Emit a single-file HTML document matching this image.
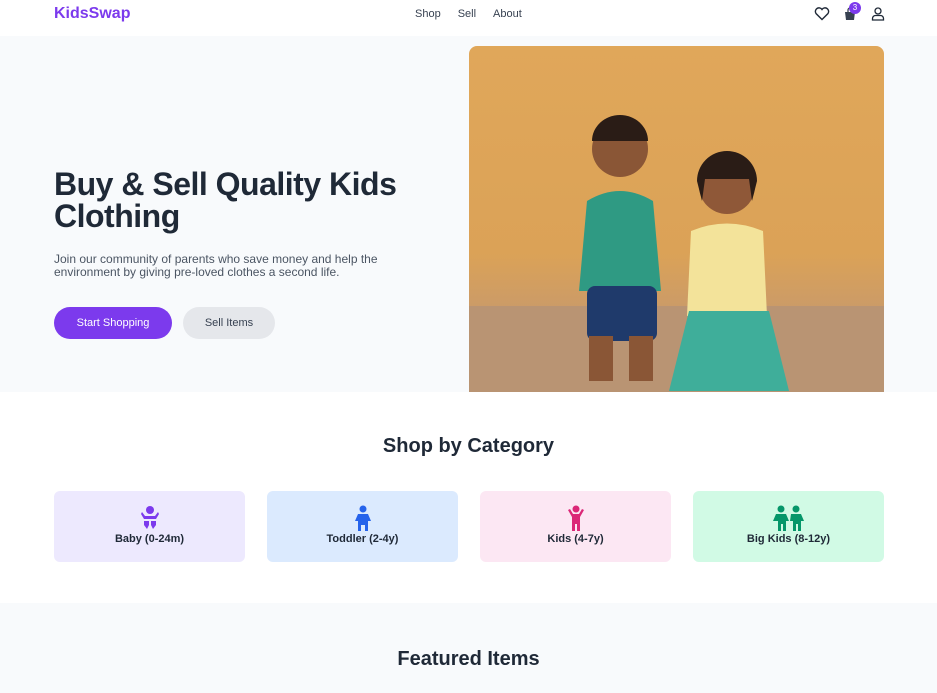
<!DOCTYPE html>
<html><head><meta charset="utf-8"><style>
*{margin:0;padding:0;box-sizing:border-box}
body{width:937px;height:693px;overflow:hidden;font-family:"Liberation Sans",sans-serif;background:#fff;color:#1f2937}
.nav{height:36px;background:#fff;position:relative}
.logo{position:absolute;left:54px;top:5px;font-size:16px;font-weight:bold;color:#7c3aed}
.links{position:absolute;left:415px;top:8px;font-size:11px;color:#374151}
.links span{margin-right:17px}
.hero{position:absolute;top:36px;left:0;width:937px;height:356px;background:#f8fafc}
h1{position:absolute;left:54px;top:168px;font-size:32px;line-height:32px;color:#1f2937;font-weight:bold;letter-spacing:-0.5px}
.p{position:absolute;left:54px;top:253px;width:370px;font-size:12px;line-height:12.5px;color:#4b5563}
.b1{position:absolute;left:54px;top:307px;width:118px;height:32px;border-radius:16px;background:#7c3aed;color:#fff;font-size:11px;text-align:center;line-height:32px}
.b2{position:absolute;left:183px;top:307px;width:92px;height:32px;border-radius:16px;background:#e5e7eb;color:#374151;font-size:11px;text-align:center;line-height:32px}
.img{position:absolute;left:469px;top:46px;width:415px;height:346px;border-radius:8px 8px 0 0;overflow:hidden;background:linear-gradient(180deg,#e0a75a 0%,#dba257 60%,#c99a6a 78%,#b89070 100%)}
h2{position:absolute;width:937px;text-align:center;font-size:20px;font-weight:bold;color:#1f2937}
.card{position:absolute;top:491px;width:191px;height:71px;border-radius:6px;text-align:center;font-size:11px;font-weight:bold;color:#1f2937}
.card svg{display:block;margin:14px auto 2px}
.feat{position:absolute;top:603px;left:0;width:937px;height:90px;background:#f8fafc}
</style></head><body>
<div class="nav"><div class="logo">KidsSwap</div>
<div class="links"><span>Shop</span><span>Sell</span><span>About</span></div>
<svg style="position:absolute;left:814px;top:7px" width="16" height="14" viewBox="0 0 16 14"><path d="M8 12.5 L2 6.5 A3 3 0 0 1 8 2.5 A3 3 0 0 1 14 6.5 Z" fill="none" stroke="#1f2937" stroke-width="1.4"/></svg>
<svg style="position:absolute;left:843px;top:7px" width="14" height="14"><path d="M2 5h10l-1 8H3z" fill="#374151"/><path d="M5 5V3a2 2 0 0 1 4 0v2" fill="none" stroke="#374151" stroke-width="1.3"/></svg>
<div style="position:absolute;left:849px;top:2px;width:12px;height:12px;border-radius:6px;background:#7c3aed;color:#fff;font-size:8px;text-align:center;line-height:12px">3</div>
<svg style="position:absolute;left:871px;top:7px" width="14" height="14"><circle cx="7" cy="4" r="3" fill="none" stroke="#1f2937" stroke-width="1.3"/><path d="M1.5 13v-1.5a3 3 0 0 1 3-3h5a3 3 0 0 1 3 3V13z" fill="none" stroke="#1f2937" stroke-width="1.3"/></svg>
</div>
<div class="hero"></div>
<h1>Buy &amp; Sell Quality Kids<br>Clothing</h1>
<div class="p">Join our community of parents who save money and help the environment by giving pre-loved clothes a second life.</div>
<div class="b1">Start Shopping</div><div class="b2">Sell Items</div>
<div class="img">
<svg width="415" height="346">
<rect x="0" y="260" width="415" height="86" fill="#b99473"/>
<circle cx="151" cy="103" r="28" fill="#8a5636"/><path d="M123 95a28 26 0 0 1 56 0z" fill="#2a1c16"/>
<path d="M118 155q33-20 66 0l8 90h-82z" fill="#2f9a83"/>
<rect x="118" y="240" width="70" height="55" rx="8" fill="#1f3a6b"/>
<rect x="120" y="290" width="24" height="45" fill="#8a5636"/><rect x="160" y="290" width="24" height="45" fill="#8a5636"/>
<circle cx="258" cy="140" r="28" fill="#8f5838"/><path d="M228 135a30 30 0 0 1 60 0l-5 20-3-22h-44l-3 22z" fill="#2a1c16"/>
<path d="M222 185q36-15 72 0l4 85h-80z" fill="#f3e39a"/>
<path d="M220 265h80l20 80h-120z" fill="#3fae9a"/>
</svg></div>
<h2 style="top:435px">Shop by Category</h2>
<div class="card" style="left:54px;background:#ede9fe"><svg width="18" height="26" viewBox="0 0 18 26"><circle cx="9" cy="5" r="4" fill="#7c3aed"/><path d="M1 7l3 4h10l3-4 1 2-3 5H3L0 9z" fill="#7c3aed"/><path d="M3 16h5v4l-2 4-3-4zM15 16h-5v4l2 4 3-4z" fill="#7c3aed"/></svg>Baby (0-24m)</div>
<div class="card" style="left:267px;background:#dbeafe"><svg width="18" height="26" viewBox="0 0 18 26"><circle cx="9" cy="4" r="3.5" fill="#2563eb"/><path d="M4 9h10l3 7h-3v10h-3v-6h-4v6H4V16H1z" fill="#2563eb"/></svg>Toddler (2-4y)</div>
<div class="card" style="left:480px;background:#fce7f3"><svg width="18" height="26" viewBox="0 0 18 26"><circle cx="9" cy="4" r="3.5" fill="#db2777"/><path d="M1 5l2-1 3 5h6l3-5 2 1-4 7v14h-3v-7h-2v7H5V12z" fill="#db2777"/></svg>Kids (4-7y)</div>
<div class="card" style="left:693px;background:#d1fae5"><svg width="32" height="26" viewBox="0 0 32 26"><circle cx="8" cy="4" r="3.5" fill="#059669"/><circle cx="23" cy="4" r="3.5" fill="#059669"/><path d="M3 9h10l3 7h-3v10h-3v-7h-2v7H5V16H0z" fill="#059669"/><path d="M18 9h10l3 7h-3v10h-3v-7h-2v7h-3V16h-3z" fill="#059669"/></svg>Big Kids (8-12y)</div>
<div class="feat"></div>
<h2 style="top:648px">Featured Items</h2>
</body></html>
